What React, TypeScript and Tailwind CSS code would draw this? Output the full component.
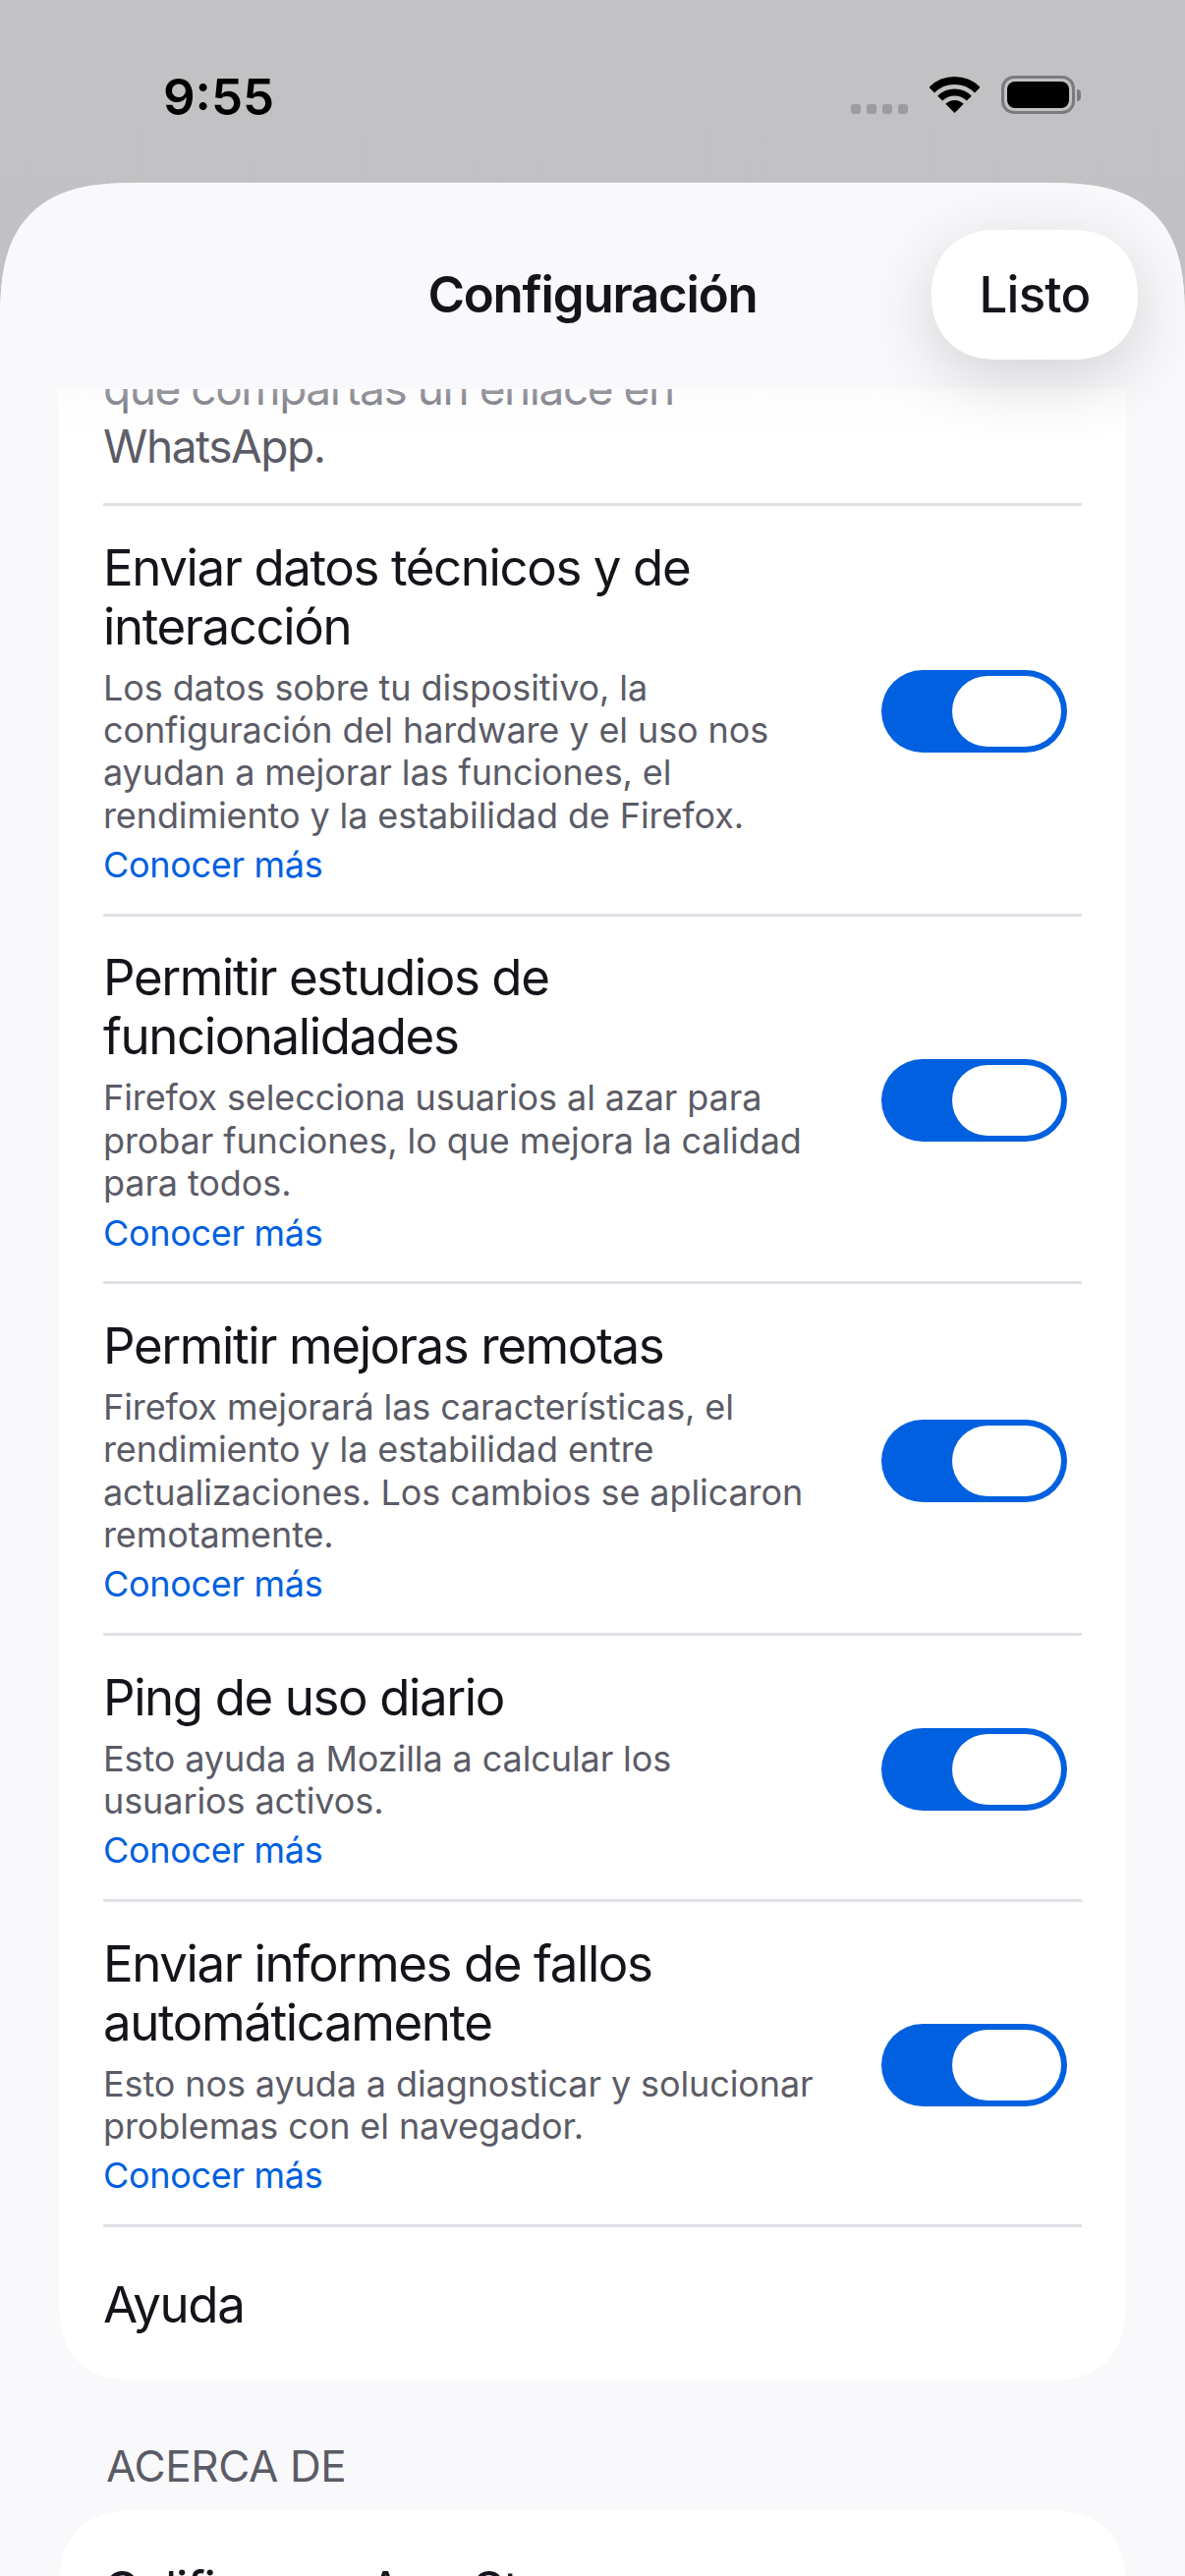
import React from "react";

const rows = [
  {
    title: "Enviar datos técnicos y de\ninteracción",
    body: "Los datos sobre tu dispositivo, la\nconfiguración del hardware y el uso nos\nayudan a mejorar las funciones, el\nrendimiento y la estabilidad de Firefox.",
  },
  {
    title: "Permitir estudios de\nfuncionalidades",
    body: "Firefox selecciona usuarios al azar para\nprobar funciones, lo que mejora la calidad\npara todos.",
  },
  {
    title: "Permitir mejoras remotas",
    body: "Firefox mejorará las características, el\nrendimiento y la estabilidad entre\nactualizaciones. Los cambios se aplicaron\nremotamente.",
  },
  {
    title: "Ping de uso diario",
    body: "Esto ayuda a Mozilla a calcular los\nusuarios activos.",
  },
  {
    title: "Enviar informes de fallos\nautomáticamente",
    body: "Esto nos ayuda a diagnosticar y solucionar\nproblemas con el navegador.",
  },
];

function Toggle() {
  return (
    <div className="w-[189px] h-[84px] rounded-full bg-[#0060df] p-[6px] flex justify-end shrink-0">
      <div className="w-[111px] h-[72px] rounded-full bg-white" />
    </div>
  );
}

function Wifi() {
  return (
    <svg width="51" height="37" viewBox="0 0 51 37" fill="none">
      <path d="M25.5 37 L16.3 27.8 A13 13 0 0 1 34.7 27.8 Z" fill="#000" />
      <path d="M10.65 22.15 A21 21 0 0 1 40.35 22.15" stroke="#000" strokeWidth="7" />
      <path d="M2.2 13.7 A33 33 0 0 1 48.8 13.7" stroke="#000" strokeWidth="8" />
    </svg>
  );
}

function Battery() {
  return (
    <div className="flex items-center gap-[2px]">
      <div className="w-[75px] h-[39px] rounded-[13px] border-[3px] border-[#7b7b7d] p-[3px]">
        <div className="w-full h-full rounded-[8px] bg-black" />
      </div>
      <div className="w-[4px] h-[12px] rounded-r-full bg-[#7b7b7d]" />
    </div>
  );
}

function App() {
  return (
    <div
      className="w-[1206px] h-[2622px] overflow-hidden flex flex-col bg-gradient-to-b from-[#c2c2c4] to-[#bbbbbd] text-[#15141a]"
      style={{ fontFamily: "Inter, 'Noto Sans', sans-serif" }}
    >
      {/* status bar */}
      <div className="h-[186px] shrink-0 flex items-start justify-between pl-[166px] pr-[106px] pt-[71px]">
        <span className="text-[51px] leading-[55px] font-semibold text-black">9:55</span>
        <div className="flex items-start pt-[7px]">
          <div className="flex gap-[6px] mt-[28px] mr-[22px]">
            <div className="w-[10px] h-[10px] rounded-[3px] bg-[#9c9c9e]" />
            <div className="w-[10px] h-[10px] rounded-[3px] bg-[#9c9c9e]" />
            <div className="w-[10px] h-[10px] rounded-[3px] bg-[#9c9c9e]" />
            <div className="w-[10px] h-[10px] rounded-[3px] bg-[#9c9c9e]" />
          </div>
          <Wifi />
          <div className="ml-[22px] -mt-[1px]">
            <Battery />
          </div>
        </div>
      </div>

      {/* sheet */}
      <div className="flex-1 min-h-0 flex flex-col rounded-t-[145px] [corner-shape:superellipse(1.5)] bg-[#f9f9fb]">
        <div className="relative z-10 h-[210px] shrink-0 rounded-t-[145px] [corner-shape:superellipse(1.5)] bg-[#f9f9fb] grid grid-cols-[1fr_auto_1fr] items-center pt-[18px] pr-[48px]">
          <div />
          <h1 className="text-[51px] leading-[60px] font-semibold tracking-[-1.2px] ml-[48px]">Configuración</h1>
          <div className="justify-self-end w-[210px] h-[132px] rounded-[66px] [corner-shape:superellipse(1.15)] bg-white flex items-center justify-center text-[51px] font-medium tracking-[-0.8px] shadow-[0_18px_70px_rgba(0,0,0,0.16)]">
            Listo
          </div>
        </div>

        <div className="relative flex-1 min-h-0 overflow-hidden px-[60px]">
          <div className="absolute inset-x-0 top-0 h-[50px] bg-gradient-to-b from-[#f9f9fb]/40 to-transparent" />
          <div className="bg-white rounded-b-[90px] [corner-shape:superellipse(1.5)] -mt-[30px]">
            <div className="px-[45px]">
              <p className="text-[46px] leading-[59px] text-[#5b5b66] tracking-[-1.45px] pb-[28px] whitespace-pre-line">
                {"que compartas un enlace en\nWhatsApp."}
              </p>
              {rows.map((row) => (
                <div key={row.title} className="border-t-[3px] border-[#e0e0e6] flex items-center justify-between pt-[32.5px] pb-[27.7px]">
                  <div className="flex flex-col">
                    <div className="text-[51px] leading-[60px] tracking-[-1.4px] whitespace-pre-line">{row.title}</div>
                    <div className="mt-[11px] text-[36px] leading-[43.4px] tracking-[-0.1px] text-[#5b5b66] whitespace-pre-line">{row.body}</div>
                    <div className="mt-[7px] text-[36px] leading-[43px] tracking-[-0.3px] text-[#0060df]">Conocer más</div>
                  </div>
                  <div className="mr-[15px] mb-[1px]">
                    <Toggle />
                  </div>
                </div>
              ))}
              <div className="border-t-[3px] border-[#e0e0e6] h-[159px] pt-[2px] flex items-center text-[51px] tracking-[-1.4px]">Ayuda</div>
            </div>
          </div>

          <h2 className="mt-[60px] ml-[48px] text-[44px] leading-[54px] tracking-[-0.4px] text-[#5b5b66]">ACERCA DE</h2>
          <div className="mt-[18px] bg-white rounded-t-[90px] [corner-shape:superellipse(1.5)] px-[45px] pt-[51px] text-[51px] leading-[60px] tracking-[-1.4px]">
            Calificar en App Store
          </div>
        </div>
      </div>
    </div>
  );
}

export default App;
